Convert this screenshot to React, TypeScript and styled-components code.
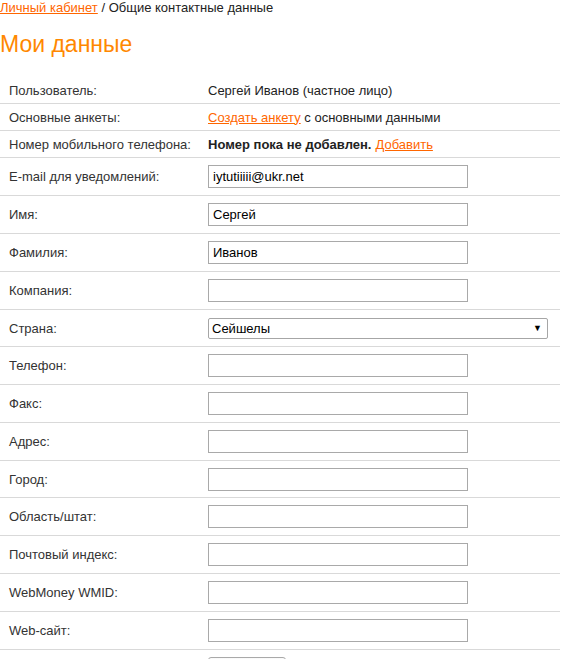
import React from "react";
import styled, { createGlobalStyle } from "styled-components";

const Global = createGlobalStyle`
  html, body { margin: 0; padding: 0; background: #fff; }
  body { font-family: "Liberation Sans", Arial, sans-serif; font-size: 13px; color: #222; }
`;

const Page = styled.div`
  width: 560px;
`;

const Crumbs = styled.div`
  line-height: 16px;
  font-size: 13px;
  color: #222;
`;

const Link = styled.a`
  color: #ff6600;
  text-decoration: underline;
  cursor: pointer;
`;

const Title = styled.h1`
  margin: 14px 0 19px;
  font-size: 23px;
  line-height: 28px;
  font-weight: normal;
  color: #ff8800;
`;

const Table = styled.div`
  display: flex;
  flex-direction: column;
`;

const Row = styled.div<{ $h?: number }>`
  display: grid;
  grid-template-columns: 208px 1fr;
  align-items: center;
  height: ${(p) => p.$h ?? 26}px;
  border-bottom: 1px solid #d9d9d9;
`;

const Label = styled.div`
  padding-left: 9px;
  color: #333;
`;

const Value = styled.div`
  color: #222;
  display: flex;
  align-items: center;
`;

const Strong = styled.b`
  font-weight: bold;
  margin-right: 4px;
`;

const Input = styled.input`
  box-sizing: border-box;
  width: 260px;
  height: 23px;
  margin: 0;
  padding: 0 4px;
  border: 1px solid #a9a9a9;
  font-family: "Liberation Sans", Arial, sans-serif;
  font-size: 13px;
  color: #000;
  outline: none;
`;

const SelectBox = styled.div`
  box-sizing: border-box;
  width: 340px;
  height: 21px;
  display: flex;
  align-items: center;
  border: 1px solid #a6a6a6;
  border-radius: 2px;
  padding-right: 5px;
`;

const Select = styled.select`
  flex: 1;
  appearance: none;
  border: none;
  background: transparent;
  font-family: "Liberation Sans", Arial, sans-serif;
  font-size: 13px;
  color: #000;
  padding: 0 0 0 3px;
  margin: 0;
  height: 19px;
  outline: none;
`;

const Arrow = styled.span`
  font-size: 9px;
  color: #000;
`;

const ButtonRow = styled.div`
  display: grid;
  grid-template-columns: 208px 1fr;
  padding-top: 7px;
`;

const Button = styled.button`
  grid-column: 2;
  width: 78px;
  height: 23px;
  border: 1px solid #a9a9a9;
  border-radius: 3px;
  background: linear-gradient(#fafafa, #e6e6e6);
  font-family: "Liberation Sans", Arial, sans-serif;
  font-size: 13px;
  justify-self: start;
`;

const fields: [string, string][] = [
  ["E-mail для уведомлений:", "iytutiiiii@ukr.net"],
  ["Имя:", "Сергей"],
  ["Фамилия:", "Иванов"],
  ["Компания:", ""],
];

const fields2: [string, number][] = [
  ["Телефон:", 37],
  ["Факс:", 37],
  ["Адрес:", 37],
  ["Город:", 36],
  ["Область/штат:", 37],
  ["Почтовый индекс:", 37],
  ["WebMoney WMID:", 37],
  ["Web-сайт:", 37],
];

export default function App() {
  return (
    <Page>
      <Global />
      <Crumbs>
        <Link>Личный кабинет</Link> / Общие контактные данные
      </Crumbs>
      <Title>Мои данные</Title>
      <Table>
        <Row>
          <Label>Пользователь:</Label>
          <Value>Сергей Иванов (частное лицо)</Value>
        </Row>
        <Row>
          <Label>Основные анкеты:</Label>
          <Value>
            <Link>Создать анкету</Link>&nbsp;с основными данными
          </Value>
        </Row>
        <Row>
          <Label>Номер мобильного телефона:</Label>
          <Value>
            <Strong>Номер пока не добавлен.</Strong>
            <Link>Добавить</Link>
          </Value>
        </Row>
        {fields.map(([l, v]) => (
          <Row $h={37} key={l}>
            <Label>{l}</Label>
            <Value>
              <Input defaultValue={v} />
            </Value>
          </Row>
        ))}
        <Row $h={36}>
          <Label>Страна:</Label>
          <Value>
            <SelectBox>
              <Select defaultValue="sc">
                <option value="sc">Сейшелы</option>
              </Select>
              <Arrow>▼</Arrow>
            </SelectBox>
          </Value>
        </Row>
        {fields2.map(([l, h]) => (
          <Row $h={h} key={l}>
            <Label>{l}</Label>
            <Value>
              <Input />
            </Value>
          </Row>
        ))}
        <ButtonRow>
          <Button>Сохранить</Button>
        </ButtonRow>
      </Table>
    </Page>
  );
}
